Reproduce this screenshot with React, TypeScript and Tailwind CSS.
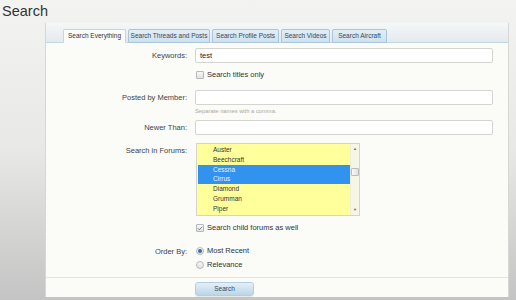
import { Check } from 'lucide-react';

const LABEL = 'text-right text-[7.5px] leading-[9px] text-[#444]';
const INPUT = 'h-[15px] w-[298px] bg-white border border-[#d4d4d0] rounded-[2px] px-[4px] text-[7.5px] leading-[13px] text-[#222]';

const FORUMS = ['Auster', 'Beechcraft', 'Cessna', 'Cirrus', 'Diamond', 'Grumman', 'Piper'];
const SELECTED = ['Cessna', 'Cirrus'];

const TABS = [
  { label: 'Search Everything', w: 'w-[63px]', active: true },
  { label: 'Search Threads and Posts', w: 'w-[82px]' },
  { label: 'Search Profile Posts', w: 'w-[67px]' },
  { label: 'Search Videos', w: 'w-[49px]' },
  { label: 'Search Aircraft', w: 'w-[55px]' },
];

function Box({ checked }: { checked?: boolean }) {
  return (
    <span className="w-[8px] h-[8px] border border-[#b8b8b8] rounded-[1px] bg-gradient-to-b from-[#f8f8f8] to-[#e2e2e2] flex items-center justify-center">
      {checked && <Check size={7} strokeWidth={3} className="text-[#4a6a86]" />}
    </span>
  );
}

function Radio({ checked }: { checked?: boolean }) {
  return (
    <span className="w-[8px] h-[8px] border border-[#b8b8b8] rounded-full bg-gradient-to-b from-[#f8f8f8] to-[#e2e2e2] flex items-center justify-center">
      {checked && <span className="w-[4px] h-[4px] rounded-full bg-[#3a6e9c]" />}
    </span>
  );
}

function Row({ label, children, className }: { label?: string; children: React.ReactNode; className?: string }) {
  return (
    <div className={'grid grid-cols-[141px_1fr] gap-x-[8px] items-center ' + (className ?? '')}>
      <div className={LABEL}>{label}</div>
      <div className="flex items-center">{children}</div>
    </div>
  );
}

export default function App() {
  return (
    <div className="w-[516px] h-[300px] overflow-hidden bg-gradient-to-b from-[#f3f3f1] via-[#e8e8e6] to-[#c4c4c4] font-['Liberation_Sans',Arial,sans-serif]">
      <h1 className="h-[23px] pl-[2px] pt-[1px] text-[14.5px] leading-[20px] text-[#333]">Search</h1>

      <div className="ml-[45px] mr-[7px] h-[274px] flex flex-col border-x border-[#d6d6d4] bg-[#fbfbf8]">
        {/* tab bar */}
        <div className="h-[20px] flex items-end gap-[2px] pl-[17px] bg-gradient-to-b from-[#f5f7f7] to-[#e3eaee] border-b border-[#c4d6e2]">
          {TABS.map((t) => (
            <div key={t.label}
              className={
                t.w + ' h-[14px] -mb-px flex items-center justify-center rounded-t-[2px] border text-[6.5px] ' +
                (t.active
                  ? 'bg-[#fbfbf8] border-[#c4d6e2] border-b-[#fbfbf8] text-[#333]'
                  : 'bg-gradient-to-b from-[#e2eef6] to-[#cfe1ee] border-[#a9c5d9] text-[#2e4a62]')
              }>
              {t.label}
            </div>
          ))}
        </div>

        {/* form */}
        <div className="flex flex-col flex-1">
          <Row label="Keywords:" className="mt-[5px]">
            <div className={INPUT}>test</div>
          </Row>
          <Row className="mt-[7px]">
            <label className="flex items-center gap-[3px] ml-[1px] text-[7.5px] leading-[10px] text-[#333]">
              <Box /> Search titles only
            </label>
          </Row>
          <Row label="Posted by Member:" className="mt-[10px]">
            <div className={INPUT} />
          </Row>
          <Row className="mt-[2px]">
            <span className="text-[5.8px] leading-[9px] text-[#a8a8a8]">Separate names with a comma.</span>
          </Row>
          <Row label="Newer Than:" className="mt-[4px]">
            <div className={INPUT} />
          </Row>
          <div className="grid grid-cols-[141px_1fr] gap-x-[8px] mt-[8px]">
            <div className={LABEL + ' pt-[3px]'}>Search in Forums:</div>
            <div className="ml-[1px] w-[164px] h-[73px] flex border border-[#d4d4cc] bg-[#ffff9c]">
              <div className="flex-1 pt-[1px] pl-[1px]">
                {FORUMS.map((f) => (
                  <div key={f}
                    className={
                      'h-[9.8px] pl-[15px] text-[6.5px] leading-[9.8px] ' +
                      (SELECTED.includes(f) ? 'bg-[#3193ee] text-[#e8f2ff]' : 'text-[#333]')
                    }>
                    {f}
                  </div>
                ))}
              </div>
              <div className="w-[9px] flex flex-col items-center bg-[#f6f6e6] border-l border-[#ececd8]">
                <span className="text-[4px] leading-[6px] mt-[2px] text-[#666]">▲</span>
                <span className="mt-[16px] w-[8px] h-[8px] border border-[#bbb] rounded-[1px] bg-gradient-to-r from-[#fafafa] to-[#e0e0e0]" />
                <span className="flex-1" />
                <span className="text-[4px] leading-[6px] mb-[2px] text-[#666]">▼</span>
              </div>
            </div>
          </div>
          <Row className="mt-[7px]">
            <label className="flex items-center gap-[3px] ml-[1px] text-[7.5px] leading-[10px] text-[#333]">
              <Box checked /> Search child forums as well
            </label>
          </Row>
          <Row label="Order By:" className="mt-[13px]">
            <label className="flex items-center gap-[3px] ml-[1px] text-[7.5px] leading-[10px] text-[#333]">
              <Radio checked /> Most Recent
            </label>
          </Row>
          <Row className="mt-[4px]">
            <label className="flex items-center gap-[3px] ml-[1px] text-[7.5px] leading-[10px] text-[#333]">
              <Radio /> Relevance
            </label>
          </Row>

          <div className="mt-[7px] border-t border-[#e3e6e3] flex-1 pt-[4px]">
            <div className="grid grid-cols-[141px_1fr] gap-x-[8px]">
              <div />
              <button type="button"
                className="w-[59px] h-[14px] rounded-[3px] border border-[#b4cde0] bg-gradient-to-b from-[#e4eff7] to-[#bcd5e8] text-[6.5px] leading-[12px] text-[#2c4a66] shadow-[0_1px_1px_rgba(0,0,0,0.08)]">
                Search
              </button>
            </div>
          </div>
        </div>
      </div>
    </div>
  );
}
